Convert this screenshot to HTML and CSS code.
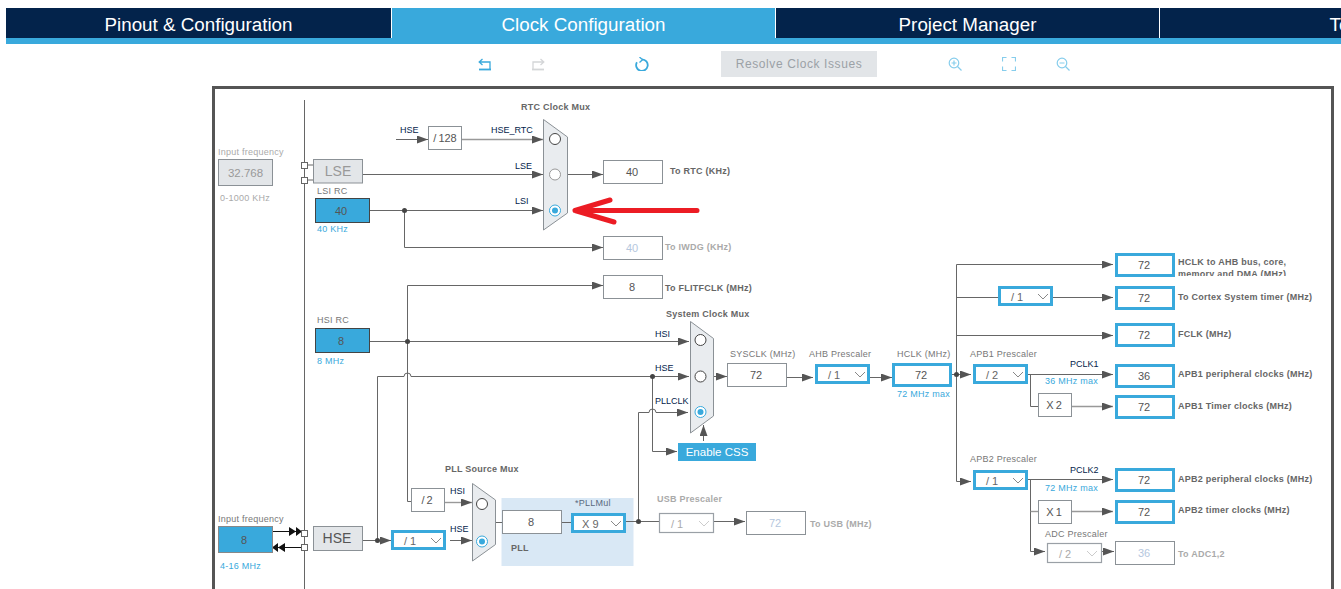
FILE: index.html
```html
<!DOCTYPE html>
<html>

<head>
	<meta charset='utf-8'>
	<title>Clock Configuration</title>
	<link rel="stylesheet" href="styles.css">
</head>

<body>
	<nav class="tabs">
		<div class="tab tab_first">Pinout &amp; Configuration</div>
		<div class="tab tab_active">Clock Configuration</div>
		<div class="tab">Project Manager</div>
		<div class="tab">Tools</div>
	</nav>

	<div class="toolbar">
		<svg class="icon icon_undo" viewBox="0 0 14 14"><path d="M4.500 2 1.200 5 4.500 8M1.500 5H12V12"/><path class="thick" d="M1 12.500H13"/></svg>
		<svg class="icon icon_redo" viewBox="0 0 14 14"><path d="M9.500 2 12.800 5 9.500 8M12.500 5H2V12"/><path class="thick" d="M1 12.500H13"/></svg>
		<svg class="icon icon_reload" viewBox="0 0 14 14"><path class="thick" d="M7 2.300A5.800 5.800 0 1 1 1.900 5.200"/><path d="M4.500 0 7.500 2.800 4.500 5.500"/></svg>
		<button class="resolve">Resolve Clock Issues</button>
		<svg class="icon icon_zoom icon_zoomin" viewBox="0 0 14 14"><circle cx="6" cy="6" r="4.800"/><path d="M9.500 9.500 13.500 13.500M3.500 6H8.500M6 3.500V8.500"/></svg>
		<svg class="icon icon_zoom icon_fit" viewBox="0 0 14 14"><path d="M.5 4.500V.5H4.500M9.500 .5H13.500V4.500M13.500 9.500V13.500H9.500M4.500 13.500H.5V9.500"/></svg>
		<svg class="icon icon_zoom icon_zoomout" viewBox="0 0 14 14"><circle cx="6" cy="6" r="4.800"/><path d="M9.500 9.500 13.500 13.500M3.500 6H8.500"/></svg>
	</div>

	<div class="diagram">
		<!-- viewBox uses page coordinates, easier to read off the tool -->
		<svg class="canvas" viewBox="215 89 1116 500" width="1116" height="500">
			<defs>
				<marker id="arrow" viewBox="0 0 11 8" refX="11" refY="4" markerWidth="11" markerHeight="8" markerUnits="userSpaceOnUse" orient="auto">
					<path class="head" d="M0 0 11 4 0 8Z"/>
				</marker>
				<clipPath id="clip_hclk"><rect x="1176" y="250" width="150" height="26"/></clipPath>
			</defs>

			<rect class="pll_panel" x="501.500" y="498" width="132" height="68"/>

			<!-- wires -->
			<path class="wire" d="M304.500 100V589"/>
			<path class="wire" d="M308 165H313M308 180H313"/>
			<path class="wire" marker-end="url(#arrow)" d="M396 139.500H428"/>
			<path class="wire wire_light" marker-end="url(#arrow)" d="M462 139.500H543"/>
			<path class="wire" marker-end="url(#arrow)" d="M363 174.500H543"/>
			<path class="wire" marker-end="url(#arrow)" d="M370 210.500H543"/>
			<path class="wire" marker-end="url(#arrow)" d="M567 174.500H603"/>
			<path class="wire" marker-end="url(#arrow)" d="M404.500 210.500V247.500H603"/>
			<path class="wire" marker-end="url(#arrow)" d="M411 501.500H407.500V285.500H603"/>
			<path class="wire" marker-end="url(#arrow)" d="M370 341.500H689"/>
			<path class="wire" marker-end="url(#arrow)" d="M377.500 540V376.500H404a3.500 3.500 0 0 1 7 0H689"/>
			<path class="wire" marker-end="url(#arrow)" d="M363 540.500H391"/>
			<path class="wire" marker-end="url(#arrow)" d="M450 540.500H472"/>
			<path class="wire wire_light" marker-end="url(#arrow)" d="M445 502.500H472"/>
			<path class="wire" d="M495 522.500H502M561 522.500H571"/>
			<path class="wire" d="M626 521.500H659"/>
			<path class="wire" marker-end="url(#arrow)" d="M638.500 521.500V412.500H649a3.500 3.500 0 0 1 7 0H688"/>
			<path class="wire" marker-end="url(#arrow)" d="M652.500 376.500V451.500H677"/>
			<path class="wire" marker-end="url(#arrow)" d="M703.500 441V425"/>
			<path class="wire" marker-end="url(#arrow)" d="M713 376.500H727"/>
			<path class="wire" marker-end="url(#arrow)" d="M787 377.500H813"/>
			<path class="wire" marker-end="url(#arrow)" d="M870 377.500H892"/>
			<path class="wire" marker-end="url(#arrow)" d="M714 521.500H745"/>
			<path class="wire" marker-end="url(#arrow)" d="M952 374.500H971"/>
			<path class="wire" marker-end="url(#arrow)" d="M956.500 264.500V481.500H971"/>
			<path class="wire" marker-end="url(#arrow)" d="M956.500 264.500H1113"/>
			<path class="wire" d="M956.500 297.500H998"/>
			<path class="wire" marker-end="url(#arrow)" d="M1053 297.500H1113"/>
			<path class="wire" marker-end="url(#arrow)" d="M956.500 335.500H1113"/>
			<path class="wire" marker-end="url(#arrow)" d="M1028 374.500H1113"/>
			<path class="wire" d="M1030.500 375V406.500H1038"/>
			<path class="wire wire_light" marker-end="url(#arrow)" d="M1072 406.500H1113"/>
			<path class="wire" marker-end="url(#arrow)" d="M1028 479.500H1113"/>
			<path class="wire" marker-end="url(#arrow)" d="M1030.500 479.500V551.500H1045"/>
			<path class="wire wire_light" d="M1030.500 511.500H1038"/>
			<path class="wire wire_light" marker-end="url(#arrow)" d="M1072 511.500H1113"/>
			<path class="wire" marker-end="url(#arrow)" d="M1102 551.500H1114"/>

			<circle class="node" cx="404.500" cy="210.500" r="2.500"/>
			<circle class="node" cx="407.500" cy="341.500" r="2.500"/>
			<circle class="node" cx="377.500" cy="540.500" r="2.500"/>
			<circle class="node" cx="638.500" cy="521.500" r="2.500"/>
			<circle class="node" cx="652.500" cy="376.500" r="2.500"/>
			<circle class="node" cx="956.500" cy="374.500" r="2.500"/>

			<!-- oscillator pins -->
			<path class="wire_black" d="M273 531.500H301M273 547.500H301"/>
			<path class="head_black" d="M289 527 296 531.500 289 536ZM296 527 302 531.500 296 536ZM285 543 278 547.500 285 552ZM278 543 272 547.500 278 552Z"/>
			<rect class="pin" x="301.500" y="162.500" width="6" height="6"/>
			<rect class="pin" x="301.500" y="177.500" width="6" height="6"/>
			<rect class="pin" x="301.500" y="530.500" width="6" height="6"/>
			<rect class="pin" x="301.500" y="544.500" width="6" height="6"/>

			<!-- muxes -->
			<polygon class="mux" points="543.500,119.500 567.500,137 567.500,213 543.500,230"/>
			<circle class="radio" cx="555" cy="139" r="5.500"/>
			<circle class="radio radio_off" cx="555" cy="174.500" r="5.500"/>
			<circle class="radio radio_on" cx="555" cy="210.500" r="5.500"/>
			<circle class="radio_dot" cx="555" cy="210.500" r="3"/>

			<polygon class="mux" points="690.500,321.500 713.500,338.500 713.500,416 690.500,433"/>
			<circle class="radio" cx="700.500" cy="340" r="5.500"/>
			<circle class="radio" cx="700.500" cy="376.500" r="5.500"/>
			<circle class="radio radio_on" cx="700.500" cy="412" r="5.500"/>
			<circle class="radio_dot" cx="700.500" cy="412" r="3"/>

			<polygon class="mux" points="472.500,483.500 495.500,500 495.500,544.500 472.500,561"/>
			<circle class="radio" cx="482" cy="504" r="5.500"/>
			<circle class="radio radio_on" cx="482" cy="541.500" r="5.500"/>
			<circle class="radio_dot" cx="482" cy="541.500" r="3"/>

			<!-- input and source blocks -->
			<rect class="box box_gray" x="218.500" y="159.500" width="54" height="26"/>
			<text class="val val_gray" x="245.500" y="177">32.768</text>
			<rect class="box box_gray" x="313.500" y="159.500" width="49" height="23.500"/>
			<text class="src src_off" x="338" y="176">LSE</text>
			<rect class="box_src" x="315.500" y="198.500" width="54" height="24"/>
			<text class="val" x="341" y="215">40</text>
			<rect class="box_src" x="315.500" y="328.500" width="54" height="24"/>
			<text class="val" x="341" y="345">8</text>
			<rect class="box_src box_src_input" x="218.500" y="526.500" width="54" height="26"/>
			<text class="val" x="244" y="544">8</text>
			<rect class="box box_gray" x="313.500" y="526.500" width="49" height="24"/>
			<text class="src" x="337" y="543">HSE</text>
			<rect class="enable" x="678" y="443" width="78" height="18"/>
			<text class="enable_text" x="717" y="456">Enable CSS</text>

			<!-- plain boxes -->
			<rect class="box" x="428.500" y="126.500" width="33" height="23"/>
			<text class="val" x="445" y="142">/ 128</text>
			<rect class="box" x="603.500" y="160.500" width="59" height="23"/>
			<text class="val" x="632" y="176">40</text>
			<rect class="box" x="603.500" y="236.500" width="59" height="23"/>
			<text class="val val_off" x="632" y="252">40</text>
			<rect class="box" x="603.500" y="275.500" width="59" height="23"/>
			<text class="val" x="632" y="291">8</text>
			<rect class="box" x="727.500" y="363.500" width="59" height="23"/>
			<text class="val" x="756" y="379">72</text>
			<rect class="box" x="411.500" y="488.500" width="33" height="23"/>
			<text class="val" x="427" y="504">/ 2</text>
			<rect class="box" x="502.500" y="510.500" width="59" height="23"/>
			<text class="val" x="531" y="526">8</text>
			<rect class="box" x="746.500" y="511.500" width="59" height="23"/>
			<text class="val val_off" x="775" y="527">72</text>
			<rect class="box" x="1038.500" y="393.500" width="33" height="23"/>
			<text class="val" x="1054" y="409">X 2</text>
			<rect class="box" x="1038.500" y="500.500" width="33" height="23"/>
			<text class="val" x="1054" y="516">X 1</text>
			<rect class="box" x="1115.500" y="541.500" width="59" height="23"/>
			<text class="val val_off" x="1144" y="557">36</text>

			<!-- outputs with blue frame -->
			<rect class="box_out" x="893.500" y="364.500" width="57" height="21"/>
			<text class="val" x="921" y="379">72</text>
			<rect class="box_out" x="1116.500" y="254.500" width="57" height="21"/>
			<text class="val" x="1144" y="269">72</text>
			<rect class="box_out" x="1116.500" y="287.500" width="57" height="21"/>
			<text class="val" x="1144" y="302">72</text>
			<rect class="box_out" x="1116.500" y="324.500" width="57" height="21"/>
			<text class="val" x="1144" y="339">72</text>
			<rect class="box_out" x="1116.500" y="365.500" width="57" height="21"/>
			<text class="val" x="1144" y="380">36</text>
			<rect class="box_out" x="1116.500" y="396.500" width="57" height="21"/>
			<text class="val" x="1144" y="411">72</text>
			<rect class="box_out" x="1116.500" y="469.500" width="57" height="21"/>
			<text class="val" x="1144" y="484">72</text>
			<rect class="box_out" x="1116.500" y="501.500" width="57" height="21"/>
			<text class="val" x="1144" y="516">72</text>

			<!-- dropdowns -->
			<rect class="sel" x="392.500" y="531.500" width="52" height="17"/>
			<text class="sel_text" x="404" y="545">/ 1</text>
			<path class="chevron" d="M431 538 436 543 441 538"/>
			<rect class="sel" x="572.500" y="514.500" width="52" height="17"/>
			<text class="sel_text" x="582" y="528">X 9</text>
			<path class="chevron" d="M611 521 616 526 621 521"/>
			<rect class="sel" x="816.500" y="365.500" width="52" height="17"/>
			<text class="sel_text" x="828" y="379">/ 1</text>
			<path class="chevron" d="M855 372 860 377 865 372"/>
			<rect class="sel" x="974.500" y="365.500" width="52" height="17"/>
			<text class="sel_text" x="986" y="379">/ 2</text>
			<path class="chevron" d="M1013 372 1018 377 1023 372"/>
			<rect class="sel" x="999.500" y="287.500" width="52" height="17"/>
			<text class="sel_text" x="1011" y="301">/ 1</text>
			<path class="chevron" d="M1038 294 1043 299 1048 294"/>
			<rect class="sel" x="974.500" y="471.500" width="52" height="17"/>
			<text class="sel_text" x="986" y="485">/ 1</text>
			<path class="chevron" d="M1013 478 1018 483 1023 478"/>
			<rect class="sel_off" x="659.500" y="513.500" width="54" height="19"/>
			<text class="sel_text sel_text_off" x="671" y="528">/ 1</text>
			<path class="chevron chevron_off" d="M699 521 704 526 709 521"/>
			<rect class="sel_off" x="1047.500" y="543.500" width="54" height="19"/>
			<text class="sel_text sel_text_off" x="1059" y="558">/ 2</text>
			<path class="chevron chevron_off" d="M1087 551 1092 556 1097 551"/>

			<!-- small captions -->
			<text class="cap cap_off" x="218" y="155">Input frequency</text>
			<text class="cap cap_off" x="220" y="201">0-1000 KHz</text>
			<text class="cap" x="317" y="194">LSI RC</text>
			<text class="cap cap_blue" x="317" y="232">40 KHz</text>
			<text class="cap" x="317" y="323">HSI RC</text>
			<text class="cap cap_blue" x="317" y="364">8 MHz</text>
			<text class="cap" x="218" y="522">Input frequency</text>
			<text class="cap cap_blue" x="220" y="569">4-16 MHz</text>

			<text class="sig" x="400" y="133">HSE</text>
			<text class="sig" x="491" y="133">HSE_RTC</text>
			<text class="sig" x="515" y="169">LSE</text>
			<text class="sig" x="515" y="204">LSI</text>
			<text class="sig" x="655" y="337">HSI</text>
			<text class="sig" x="655" y="371">HSE</text>
			<text class="sig" x="655" y="404">PLLCLK</text>
			<text class="sig" x="450" y="494">HSI</text>
			<text class="sig" x="450" y="532">HSE</text>
			<text class="sig" x="1070" y="367">PCLK1</text>
			<text class="sig" x="1070" y="473">PCLK2</text>

			<text class="title" x="521" y="110">RTC Clock Mux</text>
			<text class="title" x="666" y="317">System Clock Mux</text>
			<text class="title" x="445" y="472">PLL Source Mux</text>
			<text class="title" x="511" y="551">PLL</text>
			<text class="title title_off" x="657" y="502">USB Prescaler</text>

			<text class="cap pll_mul" x="575" y="506">*PLLMul</text>
			<text class="cap" x="730" y="357">SYSCLK (MHz)</text>
			<text class="cap" x="809" y="357">AHB Prescaler</text>
			<text class="cap" x="897" y="357">HCLK (MHz)</text>
			<text class="cap" x="970" y="357">APB1 Prescaler</text>
			<text class="cap" x="970" y="462">APB2 Prescaler</text>
			<text class="cap" x="1045" y="537">ADC Prescaler</text>
			<text class="cap cap_blue" x="897" y="397">72 MHz max</text>
			<text class="cap cap_blue" x="1045" y="384">36 MHz max</text>
			<text class="cap cap_blue" x="1045" y="491">72 MHz max</text>

			<text class="out" x="670" y="174">To RTC (KHz)</text>
			<text class="out out_off" x="665" y="250">To IWDG (KHz)</text>
			<text class="out" x="665" y="291">To FLITFCLK (MHz)</text>
			<text class="out out_off" x="810" y="527">To USB (MHz)</text>
			<text class="out" x="1178" y="265">HCLK to AHB bus, core,</text>
			<text class="out" x="1178" y="277" clip-path="url(#clip_hclk)">memory and DMA (MHz)</text>
			<text class="out" x="1178" y="300">To Cortex System timer (MHz)</text>
			<text class="out" x="1178" y="337">FCLK (MHz)</text>
			<text class="out" x="1178" y="377">APB1 peripheral clocks (MHz)</text>
			<text class="out" x="1178" y="409">APB1 Timer clocks (MHz)</text>
			<text class="out" x="1178" y="482">APB2 peripheral clocks (MHz)</text>
			<text class="out" x="1178" y="513">APB2 timer clocks (MHz)</text>
			<text class="out out_off" x="1178" y="557">To ADC1,2</text>

			<!-- hand drawn arrow on top of the shot -->
			<path class="red_arrow" d="M697 210.500H575M610 200 575 210.500 614 222"/>
		</svg>
	</div>
</body>

</html>
```

FILE: styles.css
```css
html, body {
	margin: 0;
	height: 589px;
	overflow: hidden;
	background: white;
	font-family: "Liberation Sans", Arial, sans-serif;
}

/* top tabs */
.tabs {
	display: flex;
	margin: 8px 0 0 6px;
	border-bottom: 6px solid #39a9dc;
	overflow: hidden;
}
.tab {
	flex: 0 0 384px;
	box-sizing: border-box;
	height: 30px;
	line-height: 34px;
	border-right: 1px solid white;
	background: #03234b;
	color: white;
	font-size: 18.800px;
	text-align: center;
}
.tab_first {
	flex-basis: 386px;
}
.tab_active {
	background: #39a9dc;
}

/* toolbar */
.toolbar {
	display: flex;
	align-items: center;
	height: 42px;
	box-sizing: border-box;
	padding: 7px 0 9px 478px;
}
.icon {
	width: 14px;
	height: 14px;
	flex: none;
	fill: none;
	stroke: #39a9dc;
	stroke-width: 1.3;
}
.icon .thick {
	stroke-width: 1.8;
}
.icon_redo {
	margin-left: 39px;
	stroke: #d4d6d8;
}
.icon_reload {
	margin-left: 90px;
}
.icon_zoom {
	stroke: #86cdec;
	stroke-width: 1.2;
}
.icon_zoomin {
	margin-left: 71px;
}
.icon_fit,
.icon_zoomout {
	margin-left: 40px;
}
.resolve {
	width: 156px;
	height: 26px;
	margin-left: 72px;
	padding: 0;
	border: 0;
	background: #e2e5e8;
	color: #9ba1a6;
	font: 12px "Liberation Sans", Arial, sans-serif;
	letter-spacing: 0.6px;
}

/* diagram */
.diagram {
	width: 1116px;
	height: 503px;
	margin-left: 212px;
	border: solid #555;
	border-width: 3px 3px 0;
}
.canvas {
	display: block;
}
.pll_panel {
	fill: #d9e8f5;
}
.wire {
	fill: none;
	stroke: #666;
	stroke-width: 1;
}
.wire_light {
	stroke: #999;
	stroke-width: 1.400;
}
.head {
	fill: #555;
}
.wire_black {
	stroke: #111;
	stroke-width: 1;
}
.head_black {
	fill: #111;
}
.node {
	fill: #444;
}
.pin {
	fill: white;
	stroke: #666;
}
.mux {
	fill: #e9ecef;
	stroke: #8b9196;
}
.radio {
	fill: white;
	stroke: #444;
	stroke-width: 1;
}
.radio_off {
	stroke: #999;
}
.radio_on {
	stroke: #39a9dc;
}
.radio_dot {
	fill: #39a9dc;
}
.box {
	fill: white;
	stroke: #8b9196;
}
.box_gray {
	fill: #e3e6e9;
}
.box_src {
	fill: #39a9dc;
	stroke: #444;
}
.box_src_input {
	stroke: #888;
}
.box_out,
.sel {
	fill: white;
	stroke: #39a9dc;
	stroke-width: 3;
}
.sel_off {
	fill: white;
	stroke: #9aa0a6;
	stroke-width: 1.2;
}
.chevron {
	fill: none;
	stroke: #888;
	stroke-width: 1;
}
.chevron_off {
	stroke: #ccc;
}
.enable {
	fill: #39a9dc;
}

/* diagram text */
text {
	font-family: "Liberation Sans", Arial, sans-serif;
}
.val {
	font-size: 11px;
	word-spacing: -1px;
	fill: #555;
	text-anchor: middle;
}
.val_gray {
	fill: #999;
	font-size: 11.500px;
}
.val_off {
	fill: #b5c7de;
}
.src {
	font-size: 14px;
	fill: #555;
	text-anchor: middle;
}
.src_off {
	fill: #999;
}
.sel_text {
	font-size: 11px;
	fill: #666;
}
.sel_text_off {
	fill: #aaa;
}
.enable_text {
	font-size: 11.500px;
	fill: white;
	text-anchor: middle;
}
.cap {
	font-size: 9px;
	letter-spacing: 0.25px;
	fill: #777;
}
.cap_off {
	fill: #aaa;
}
.cap_blue {
	fill: #39a9dc;
}
.pll_mul {
	fill: #5a6a80;
}
.sig {
	font-size: 9px;
	fill: #03234b;
}
.title,
.out {
	font-size: 9px;
	font-weight: bold;
	letter-spacing: 0.25px;
	fill: #666;
}
.title_off,
.out_off {
	fill: #aaa;
}
.red_arrow {
	fill: none;
	stroke: #ec1c24;
	stroke-width: 5;
	stroke-linecap: round;
	stroke-linejoin: round;
}
```
